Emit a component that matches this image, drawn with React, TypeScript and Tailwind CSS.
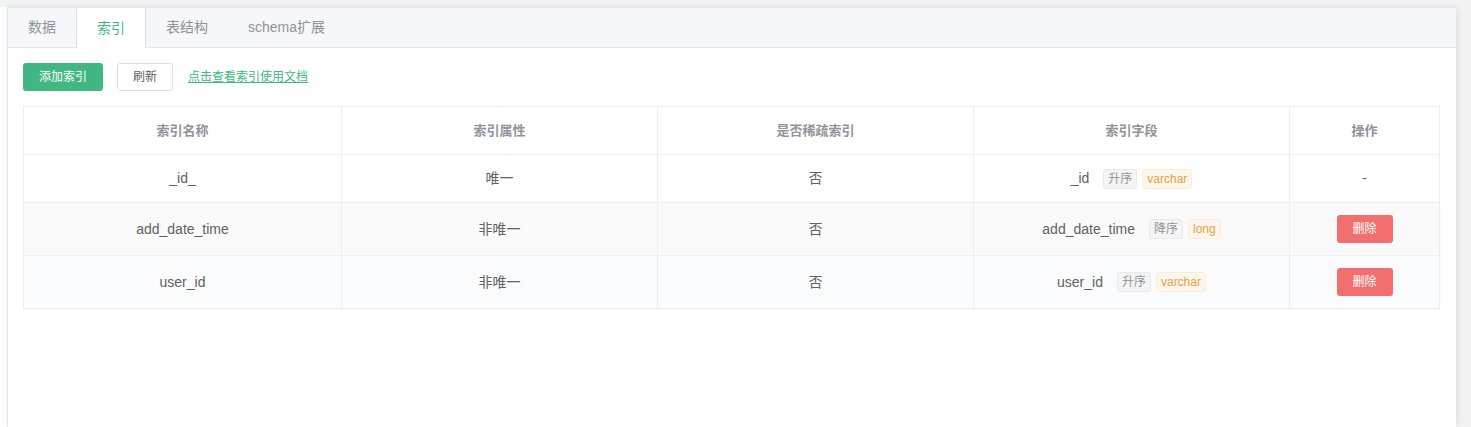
import React from 'react';

const tabs = ['数据', '索引', '表结构', 'schema扩展'];

type Row = {
  name: string;
  unique: string;
  sparse: string;
  field: string;
  order: string;
  type: string;
  deletable: boolean;
  bg: string;
  h: string;
};

const rows: Row[] = [
  { name: '_id_', unique: '唯一', sparse: '否', field: '_id', order: '升序', type: 'varchar', deletable: false, bg: 'bg-white', h: 'h-[48px]' },
  { name: 'add_date_time', unique: '非唯一', sparse: '否', field: 'add_date_time', order: '降序', type: 'long', deletable: true, bg: 'bg-[#fafafa]', h: 'h-[53px]' },
  { name: 'user_id', unique: '非唯一', sparse: '否', field: 'user_id', order: '升序', type: 'varchar', deletable: true, bg: 'bg-[#fafbfc]', h: 'h-[53px]' },
];

const cell = 'flex items-center justify-center border-r border-b border-[#ebeef5]';

export default function App() {
  return (
    <div
      className="w-full h-[427px] bg-[#f3f3f3] pt-[7px] overflow-hidden"
      style={{ fontFamily: '"Liberation Sans", "Noto Sans CJK SC", sans-serif' }}
    >
      <div className="flex h-full">
        <div className="w-[7px] bg-white" />
        <div className="w-[1449px] h-full bg-white border-l border-t border-[#e4e7ed] rounded-tr-[4px] shadow-[2px_0_6px_rgba(0,0,0,0.08)]">
          {/* tabs */}
          <div className="flex h-[40px] bg-[#f5f7fa] border-b border-[#e4e7ed] rounded-tr-[4px]">
            {tabs.map((t, i) => (
              <div
                key={t}
                className={
                  i === 1
                    ? 'px-[20px] h-[40px] flex items-center text-[14px] text-[#41b883] bg-white border-l border-r border-[#dcdfe6]'
                    : 'px-[20px] h-full flex items-center text-[14px] text-[#909399]'
                }
              >
                {t}
              </div>
            ))}
          </div>

          <div className="pt-[15px] pl-[15px] pr-[15px]">
            <div className="flex items-center h-[28px]">
              <button className="w-[80px] h-[28px] rounded-[3px] bg-[#41b883] text-white text-[12px]">添加索引</button>
              <button className="ml-[14px] w-[56px] h-[28px] rounded-[3px] bg-white border border-[#dcdfe6] text-[#606266] text-[12px]">刷新</button>
              <a className="ml-[15px] text-[12px] text-[#41b883] underline">点击查看索引使用文档</a>
            </div>

            <div className="mt-[15px] w-[1418px] border-l border-t border-[#ebeef5]">
              <div className="grid grid-cols-[318px_316px_316px_316px_150px] h-[48px] text-[13px] font-bold text-[#909399]">
                <div className={cell}>索引名称</div>
                <div className={cell}>索引属性</div>
                <div className={cell}>是否稀疏索引</div>
                <div className={cell}>索引字段</div>
                <div className={cell}>操作</div>
              </div>
              {rows.map((r) => (
                <div key={r.name} className={`grid grid-cols-[318px_316px_316px_316px_150px] ${r.h} ${r.bg} text-[14px] text-[#606266]`}>
                  <div className={cell}>{r.name}</div>
                  <div className={cell}>{r.unique}</div>
                  <div className={cell}>{r.sparse}</div>
                  <div className={cell}>
                    <span className="mr-[14px]">{r.field}</span>
                    <span className="h-[20px] px-[4px] flex items-center rounded-[3px] bg-[#f4f4f5] border border-[#e9e9eb] text-[#909399] text-[12px]">{r.order}</span>
                    <span className="ml-[5px] h-[20px] px-[4px] flex items-center rounded-[3px] bg-[#fdf6ec] border border-[#faecd8] text-[#e6a23c] text-[12px]">{r.type}</span>
                  </div>
                  <div className={cell}>
                    {r.deletable ? (
                      <button className="w-[56px] h-[28px] rounded-[3px] bg-[#f36f6f] text-white text-[12px]">删除</button>
                    ) : (
                      <span>-</span>
                    )}
                  </div>
                </div>
              ))}
            </div>
          </div>
        </div>
      </div>
    </div>
  );
}
